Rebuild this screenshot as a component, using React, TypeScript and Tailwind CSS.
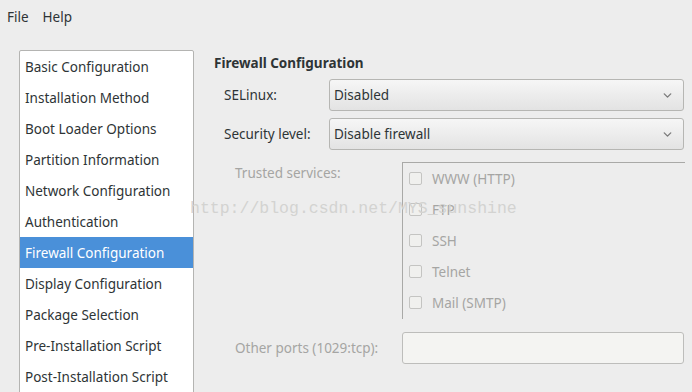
import { ChevronDown } from "lucide-react";

const sections = [
  "Basic Configuration",
  "Installation Method",
  "Boot Loader Options",
  "Partition Information",
  "Network Configuration",
  "Authentication",
  "Firewall Configuration",
  "Display Configuration",
  "Package Selection",
  "Pre-Installation Script",
  "Post-Installation Script",
];

const services = ["WWW (HTTP)", "FTP", "SSH", "Telnet", "Mail (SMTP)"];

function Combo({ value }: { value: string }) {
  return (
    <div className="flex h-[32px] w-[355px] items-center justify-between rounded-[3px] border border-[#b6b6b3] bg-linear-to-b from-[#f6f6f6] to-[#e3e3e3] pl-[4px] pr-[9px] text-[#2e3436]">
      <span>{value}</span>
      <ChevronDown size={13} strokeWidth={2.5} className="text-[#7b7b7b]" />
    </div>
  );
}

export default function App() {
  return (
    <div
      className="relative h-[392px] w-[692px] overflow-hidden bg-[#ededed] text-[13.5px] text-[#2e3436]"
      style={{ fontFamily: '"Noto Sans", "Open Sans", sans-serif' }}
    >
      {/* menu bar */}
      <div className="flex h-[34px] items-center gap-[14px] pl-[7px]">
        <span>File</span>
        <span>Help</span>
      </div>

      <div className="flex pl-[19px] pt-[16px]">
        {/* section list */}
        <div className="h-[400px] w-[175px] shrink-0 rounded-t-[2px] border border-[#b4b4b2] bg-white">
          {sections.map((s) => (
            <div
              key={s}
              className={`flex h-[31px] items-center pl-[5px] pt-[2px] ${
                s === "Firewall Configuration" ? "bg-[#4a90d9] text-white" : ""
              }`}
            >
              {s}
            </div>
          ))}
        </div>

        {/* settings */}
        <div className="ml-[20px] flex flex-col">
          <div className="mt-[3px] font-bold">Firewall Configuration</div>

          <div className="mt-[6px] grid grid-cols-[105px_auto] items-center gap-y-[7px] pl-[10px]">
            <span>SELinux:</span>
            <Combo value="Disabled" />
            <span>Security level:</span>
            <Combo value="Disable firewall" />
          </div>

          <div className="mt-[12px] flex pl-[21px] text-[#a5a5a3]">
            <div className="w-[167px] pt-[1px]">Trusted services:</div>
            <div className="h-[157px] w-[283px] border-l border-t border-[#a9a9a7] pl-[6px]">
              {services.map((s) => (
                <div key={s} className="flex h-[31px] items-center gap-[10px]">
                  <span className="h-[13px] w-[13px] rounded-[2px] border border-[#c4c4c2] bg-[#f0f0ee]" />
                  <span>{s}</span>
                </div>
              ))}
            </div>
          </div>

          <div className="mt-[13px] flex items-center pl-[21px] text-[#a5a5a3]">
            <div className="w-[167px]">Other ports (1029:tcp):</div>
            <div className="h-[32px] w-[282px] rounded-[3px] border border-[#bdbdbb] bg-[#f4f4f2]" />
          </div>
        </div>
      </div>

      {/* watermark */}
      <div
        className="pointer-events-none absolute left-[190px] top-[197px] text-[16.5px] text-[#d3d3d1]"
        style={{ fontFamily: '"Liberation Mono", monospace' }}
      >
        http://blog.csdn.net/MYS_sunshine
      </div>
    </div>
  );
}
